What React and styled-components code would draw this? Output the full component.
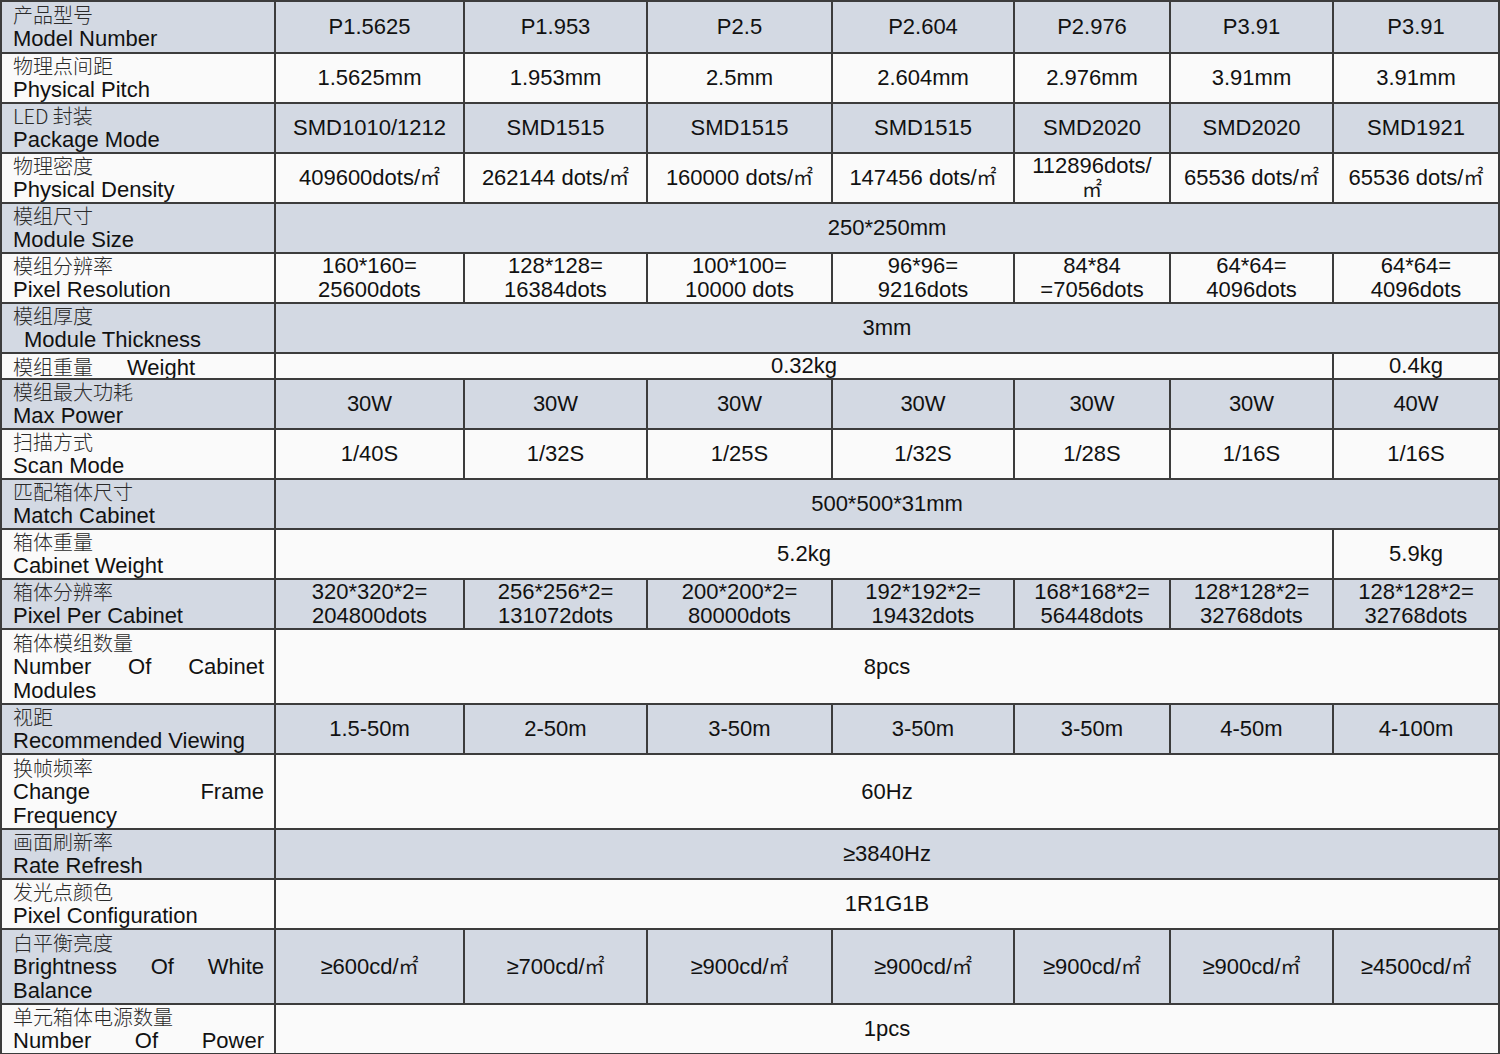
import React from 'react';
import styled, { createGlobalStyle } from 'styled-components';

const GlobalStyle = createGlobalStyle`
  html, body {
    margin: 0;
    padding: 0;
    background: #ffffff;
    overflow: hidden;
  }
  body {
    font-family: "Liberation Sans", Arial, "Noto Sans CJK SC", sans-serif;
    color: #111111;
  }
`;

const Table = styled.table`
  width: 1498px;
  table-layout: fixed;
  border-collapse: collapse;
  border: 2px solid #3c3c3c;
  font-size: 22px;
  line-height: 24px;
`;

const Row = styled.tr`
  height: ${(p) => p.$h}px;
  background: ${(p) => (p.$shade ? '#d3d9e3' : '#fafafa')};
`;

const LabelCell = styled.td`
  border: 2px solid #3c3c3c;
  padding: 0 10px 0 11px;
  vertical-align: middle;
  text-align: left;
  white-space: nowrap;
  overflow: hidden;
`;

const Zh = styled.div`
  font-family: "Noto Sans CJK SC", "Liberation Serif", serif;
  font-size: 20px;
  font-weight: 300;
  color: #2a2a2a;
  height: 24px;
  line-height: 24px;
  white-space: pre;
`;

const En = styled.div`
  height: 24px;
  line-height: 24px;
  padding-left: ${(p) => (p.$indent ? 11 : 0)}px;
  text-align: ${(p) => (p.$justify ? 'justify' : 'left')};
  text-align-last: ${(p) => (p.$justify ? 'justify' : 'auto')};
`;

const ValueCell = styled.td`
  border: 2px solid #3c3c3c;
  padding: 0 4px;
  vertical-align: middle;
  text-align: center;
  white-space: pre-line;
  line-height: 24px;
`;

const Sq = styled.span`
  font-family: "Noto Sans CJK SC", serif;
  font-size: 20px;
  font-weight: 400;
  color: #1a1a1a;
  line-height: 1;
`;

const InlineLabel = styled.div`
  display: flex;
  align-items: baseline;
  gap: 34px;
  height: 22px;
  line-height: 22px;
`;

const cols = [274, 189, 183, 185, 182, 156, 163, 166];

// text with ㎡ rendered in a CJK face
const fmt = (t) =>
  t.split('㎡').flatMap((part, i, arr) =>
    i < arr.length - 1 ? [part, <Sq key={i}>㎡</Sq>] : [part]
  );

const each = (list) => list.map((t) => ({ t }));

const rows = [
  { zh: '产品型号', en: [{ t: 'Model Number' }], h: 52, cells: each(['P1.5625', 'P1.953', 'P2.5', 'P2.604', 'P2.976', 'P3.91', 'P3.91']) },
  { zh: '物理点间距', en: [{ t: 'Physical Pitch' }], h: 50, cells: each(['1.5625mm', '1.953mm', '2.5mm', '2.604mm', '2.976mm', '3.91mm', '3.91mm']) },
  { zh: 'LED 封装', en: [{ t: 'Package Mode' }], h: 50, cells: each(['SMD1010/1212', 'SMD1515', 'SMD1515', 'SMD1515', 'SMD2020', 'SMD2020', 'SMD1921']) },
  { zh: '物理密度', en: [{ t: 'Physical Density' }], h: 50, cells: each(['409600dots/㎡', '262144 dots/㎡', '160000 dots/㎡', '147456 dots/㎡', '112896dots/\n㎡', '65536 dots/㎡', '65536 dots/㎡']) },
  { zh: '模组尺寸', en: [{ t: 'Module Size' }], h: 50, cells: [{ t: '250*250mm', span: 7 }] },
  { zh: '模组分辨率', en: [{ t: 'Pixel Resolution' }], h: 50, cells: each(['160*160=\n25600dots', '128*128=\n16384dots', '100*100=\n10000 dots', '96*96=\n9216dots', '84*84\n=7056dots', '64*64=\n4096dots', '64*64=\n4096dots']) },
  { zh: '模组厚度', en: [{ t: 'Module Thickness', indent: true }], h: 50, cells: [{ t: '3mm', span: 7 }] },
  { zh: null, inline: '模组重量', tail: 'Weight', h: 25, cells: [{ t: '0.32kg', span: 6 }, { t: '0.4kg' }] },
  { zh: '模组最大功耗', en: [{ t: 'Max Power' }], h: 50, cells: each(['30W', '30W', '30W', '30W', '30W', '30W', '40W']) },
  { zh: '扫描方式', en: [{ t: 'Scan Mode' }], h: 50, cells: each(['1/40S', '1/32S', '1/25S', '1/32S', '1/28S', '1/16S', '1/16S']) },
  { zh: '匹配箱体尺寸', en: [{ t: 'Match Cabinet' }], h: 50, cells: [{ t: '500*500*31mm', span: 7 }] },
  { zh: '箱体重量', en: [{ t: 'Cabinet Weight' }], h: 50, cells: [{ t: '5.2kg', span: 6 }, { t: '5.9kg' }] },
  { zh: '箱体分辨率', en: [{ t: 'Pixel Per Cabinet' }], h: 50, cells: each(['320*320*2=\n204800dots', '256*256*2=\n131072dots', '200*200*2=\n80000dots', '192*192*2=\n19432dots', '168*168*2=\n56448dots', '128*128*2=\n32768dots', '128*128*2=\n32768dots']) },
  { zh: '箱体模组数量', en: [{ t: 'Number Of Cabinet', justify: true }, { t: 'Modules' }], h: 75, cells: [{ t: '8pcs', span: 7 }] },
  { zh: '视距', en: [{ t: 'Recommended Viewing' }], h: 50, cells: each(['1.5-50m', '2-50m', '3-50m', '3-50m', '3-50m', '4-50m', '4-100m']) },
  { zh: '换帧频率', en: [{ t: 'Change Frame', justify: true }, { t: 'Frequency' }], h: 75, cells: [{ t: '60Hz', span: 7 }] },
  { zh: '画面刷新率', en: [{ t: 'Rate Refresh' }], h: 50, cells: [{ t: '≥3840Hz', span: 7 }] },
  { zh: '发光点颜色', en: [{ t: 'Pixel Configuration' }], h: 50, cells: [{ t: '1R1G1B', span: 7 }] },
  { zh: '白平衡亮度', en: [{ t: 'Brightness Of White', justify: true }, { t: 'Balance' }], h: 75, cells: each(['≥600cd/㎡', '≥700cd/㎡', '≥900cd/㎡', '≥900cd/㎡', '≥900cd/㎡', '≥900cd/㎡', '≥4500cd/㎡']) },
  { zh: '单元箱体电源数量', en: [{ t: 'Number Of Power', justify: true }], h: 50, cells: [{ t: '1pcs', span: 7 }] },
];

export default function App() {
  return (
    <>
      <GlobalStyle />
      <Table>
        <colgroup>
          {cols.map((w, i) => (
            <col key={i} style={{ width: w }} />
          ))}
        </colgroup>
        <tbody>
          {rows.map((r, i) => (
            <Row key={i} $h={r.h} $shade={i % 2 === 0}>
              <LabelCell>
                {r.inline ? (
                  <InlineLabel>
                    <Zh as="span">{r.inline}</Zh>
                    <span>{r.tail}</span>
                  </InlineLabel>
                ) : (
                  <>
                    <Zh>{r.zh}</Zh>
                    {r.en.map((l, j) => (
                      <En key={j} $justify={l.justify} $indent={l.indent}>
                        {l.t}
                      </En>
                    ))}
                  </>
                )}
              </LabelCell>
              {r.cells.map((c, j) => (
                <ValueCell key={j} colSpan={c.span || 1}>
                  {fmt(c.t)}
                </ValueCell>
              ))}
            </Row>
          ))}
        </tbody>
      </Table>
    </>
  );
}
